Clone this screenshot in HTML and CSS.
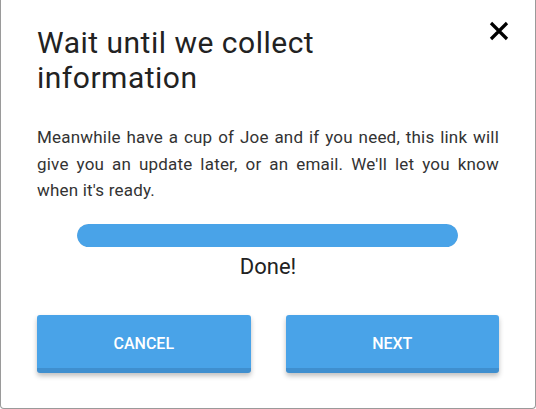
FILE: index.html
```html
<!DOCTYPE html>
<html>
<head>
    <meta name="viewport" content="width=device-width, initial-scale=1">
    <link rel="stylesheet" href="styles.css">
</head>
<body>
    <div class="dialog">
        <div class="dialog-header">
            <h1 class="title">Wait until we collect information</h1>
            <button class="close" aria-label="Close">
                <svg width="20" height="20" viewBox="0 0 20 20">
                    <path d="M2 2 L18 18 M18 2 L2 18" stroke="#000" stroke-width="3.2" fill="none"/>
                </svg>
            </button>
        </div>

        <p class="message">Meanwhile have a cup of Joe and if you need, this link will give you an update later, or an email. We'll let you know when it's ready.</p>

        <div class="progress">
            <div class="progress-bar" style="width: 100%;"></div>
        </div>
        <div class="status">Done!</div>

        <div class="actions">
            <button class="btn">CANCEL</button>
            <button class="btn">NEXT</button>
        </div>
    </div>
</body>
</html>
```

FILE: styles.css
```css
html, body {
    margin: 0;
    height: 100%;
}

body {
    background-color: #ffffff;
    font-family: Roboto, "Liberation Sans", sans-serif;
    color: #222;
}

.dialog {
    width: 536px;
    height: 409px;
    box-sizing: border-box;
    background-color: #fff;
    border: 1px solid #9a9a9a;
    border-top: none;
    border-radius: 0 0 4px 4px;
    padding: 25px 36px 0 36px;
}

.dialog-header {
    display: flex;
    justify-content: space-between;
    align-items: flex-start;
}

.title {
    margin: 0;
    font-size: 30px;
    font-weight: 400;
    line-height: 35px;
    letter-spacing: 0.5px;
    width: 330px;
    color: #222;
}

.close {
    border: none;
    background: none;
    padding: 0;
    margin-top: -4px;
    margin-right: -10px;
    cursor: pointer;
}

.close svg {
    display: block;
}

.message {
    margin: 29px 0 0 0;
    font-size: 17px;
    line-height: 26.5px;
    letter-spacing: 0.2px;
    text-align: justify;
    color: #333;
}

.progress {
    margin: 20px 41px 0 40px;
    height: 23px;
    border-radius: 12px;
    background-color: #e6e6e6;
    overflow: hidden;
}

.progress-bar {
    height: 100%;
    background-color: #49a3e8;
    border-radius: 12px;
}

.status {
    text-align: center;
    font-size: 22px;
    line-height: 30px;
    margin-top: 5px;
    color: #222;
}

.actions {
    display: flex;
    gap: 35px;
    margin-top: 33px;
}

.btn {
    flex: 1;
    height: 58px;
    box-sizing: border-box;
    border: none;
    border-bottom: 5px solid #3f8fcf;
    border-radius: 3px;
    background-color: #49a3e8;
    color: #fff;
    font-family: Roboto, "Liberation Sans", sans-serif;
    font-size: 16px;
    font-weight: 500;
    padding-top: 5px;
    box-shadow: 0 3px 5px rgba(0, 0, 0, 0.25);
    cursor: pointer;
}
```
